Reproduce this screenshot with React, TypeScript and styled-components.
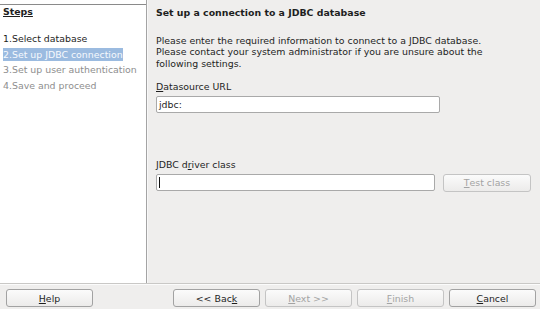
import React, { FC } from 'react';
import styled, { createGlobalStyle } from 'styled-components';

const Global = createGlobalStyle`
  html, body { margin: 0; padding: 0; }
  body {
    width: 540px;
    height: 309px;
    overflow: hidden;
    background: #efeeed;
    font-family: "DejaVu Sans", "Liberation Sans", sans-serif;
    font-size: 9.4px;
    color: #1e1e1e;
  }
`;

const Dialog = styled.div`
  width: 540px;
  height: 309px;
  display: flex;
  flex-direction: column;
`;

const Body = styled.div`
  flex: 1;
  display: flex;
  border-bottom: 1px solid #c9c8c6;
`;

const StepsPane = styled.div`
  width: 146px;
  background: #ffffff;
  border-right: 1px solid #a4a4a4;
  padding-top: 4px;
`;

const StepsBox = styled.div`
  border-top: 1px solid #8a8a8a;
  padding: 1px 0 0 3px;
`;

const StepsTitle = styled.div`
  font-weight: bold;
  text-decoration: underline;
  line-height: 12px;
`;

const StepList = styled.div`
  margin-top: 13px;
  display: flex;
  flex-direction: column;
`;

const Step = styled.div<{ $state: 'done' | 'current' | 'todo' }>`
  height: 15.5px;
  line-height: 15.5px;
  white-space: nowrap;
  color: ${(p) => (p.$state === 'todo' ? '#8e8e8e' : '#1e1e1e')};
  span {
    padding: 1px 0;
    background: ${(p) => (p.$state === 'current' ? '#9bbbe0' : 'transparent')};
    color: ${(p) => (p.$state === 'current' ? '#f6f9fd' : 'inherit')};
  }
`;

const Content = styled.div`
  flex: 1;
  border-left: 1px solid #f8f8f8;
  padding: 7px 0 0 8px;
  display: flex;
  flex-direction: column;
`;

const Heading = styled.div`
  font-weight: bold;
  line-height: 12px;
`;

const Description = styled.div`
  margin-top: 16px;
  line-height: 11.3px;
  width: 345px;
`;

const Label = styled.div<{ $top: number }>`
  margin-top: ${(p) => p.$top}px;
  line-height: 12px;
`;

const FieldRow = styled.div`
  margin-top: 3px;
  display: flex;
  align-items: center;
  gap: 8px;
`;

const Input = styled.div<{ $width: number }>`
  box-sizing: border-box;
  width: ${(p) => p.$width}px;
  height: 17px;
  background: #ffffff;
  border: 1px solid #a9a9a9;
  border-radius: 2px;
  padding: 0 2px;
  line-height: 15px;
  display: flex;
  align-items: center;
`;

const Caret = styled.i`
  display: block;
  width: 1px;
  height: 11px;
  background: #111;
`;

const Button = styled.div<{ $disabled?: boolean; $width?: number }>`
  box-sizing: border-box;
  width: ${(p) => p.$width ?? 87}px;
  height: 18px;
  border: 1px solid ${(p) => (p.$disabled ? '#c4c4c4' : '#a2a2a2')};
  border-radius: 3px;
  background: linear-gradient(#fbfbfb, #ecebea);
  color: ${(p) => (p.$disabled ? '#a3a3a3' : '#1e1e1e')};
  display: flex;
  align-items: center;
  justify-content: center;
`;

const Footer = styled.div`
  box-sizing: border-box;
  height: 25px;
  border-top: 1px solid #fbfbfb;
  display: flex;
  align-items: flex-start;
  padding: 4px 4px 0 6px;
`;

const Spacer = styled.div`
  flex: 1;
`;

const ButtonGroup = styled.div`
  display: flex;
  gap: 5px;
`;

const App: FC = () => {
  return (
    <>
      <Global />
      <Dialog>
        <Body>
          <StepsPane>
            <StepsBox>
              <StepsTitle>Steps</StepsTitle>
              <StepList>
                <Step $state="done"><span>1.Select database</span></Step>
                <Step $state="current"><span>2.Set up JDBC connection</span></Step>
                <Step $state="todo"><span>3.Set up user authentication</span></Step>
                <Step $state="todo"><span>4.Save and proceed</span></Step>
              </StepList>
            </StepsBox>
          </StepsPane>
          <Content>
            <Heading>Set up a connection to a JDBC database</Heading>
            <Description>
              Please enter the required information to connect to a JDBC database.
              Please contact your system administrator if you are unsure about the
              following settings.
            </Description>
            <Label $top={12}><u>D</u>atasource URL</Label>
            <FieldRow>
              <Input $width={284}>jdbc:</Input>
            </FieldRow>
            <Label $top={46}>JDBC d<u>r</u>iver class</Label>
            <FieldRow>
              <Input $width={279}><Caret /></Input>
              <Button $disabled $width={88}><u>T</u>est class</Button>
            </FieldRow>
          </Content>
        </Body>
        <Footer>
          <Button><u>H</u>elp</Button>
          <Spacer />
          <ButtonGroup>
            <Button>&lt;&lt; Bac<u>k</u></Button>
            <Button $disabled><u>N</u>ext &gt;&gt;</Button>
            <Button $disabled><u>F</u>inish</Button>
            <Button><u>C</u>ancel</Button>
          </ButtonGroup>
        </Footer>
      </Dialog>
    </>
  );
};

export default App;
